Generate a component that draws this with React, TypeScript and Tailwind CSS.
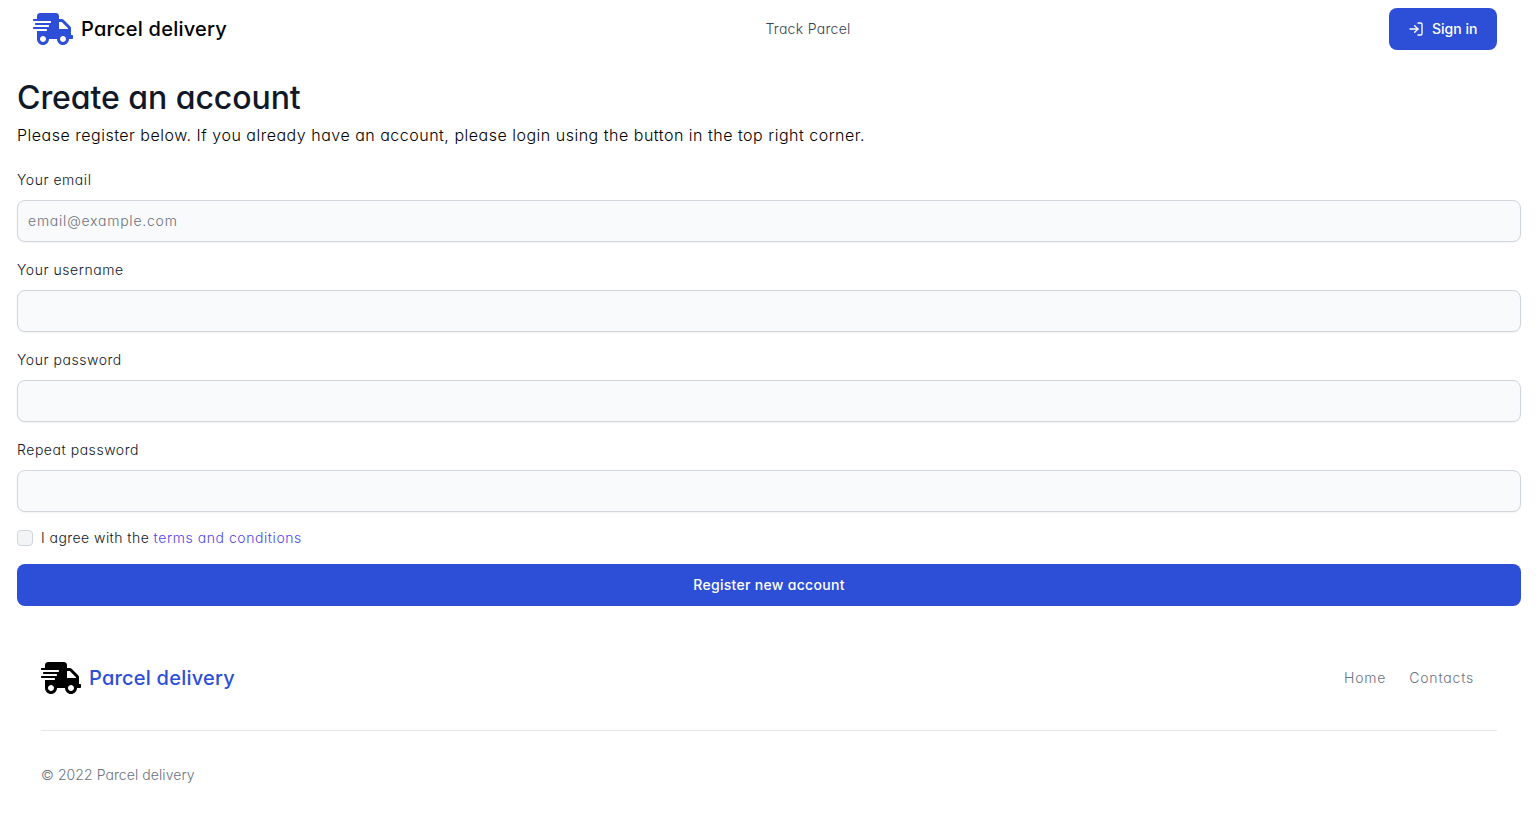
import React from "react";
import { FaShippingFast } from "react-icons/fa";
import { FiLogIn } from "react-icons/fi";

function Field({ label, type, placeholder }: { label: string; type: string; placeholder?: string }) {
  return (
    <div className="mb-4 flex flex-col">
      <label className="mb-2 h-6 text-sm leading-6 tracking-[0.54px] text-[#111827]">
        <span>{label}</span>
      </label>
      <input
        type={type}
        placeholder={placeholder}
        className="h-[42px] w-full rounded-lg border border-gray-300 bg-gray-50 px-2.5 pb-0.5 text-sm tracking-[0.77px] shadow-xs placeholder:text-[#6b7280]"
      />
    </div>
  );
}

export default function App() {
  return (
    <div className="h-[823px] bg-white font-['Inter',sans-serif] font-light text-black [font-feature-settings:'cv11']">
      <header className="flex h-[58px] items-center justify-between pl-[33px] pr-[41px]">
        <a className="flex items-center gap-2">
          <FaShippingFast className="size-10 text-[#2d4fd7]" />
          <span className="text-xl font-medium tracking-[0.22px]">Parcel delivery</span>
        </a>
        <a className="text-sm tracking-[0.3px] text-[#374151]">Track Parcel</a>
        <button className="flex h-[42px] w-[108px] items-center gap-2 rounded-lg bg-[#2d4fd7] pl-[19px] text-sm font-medium text-white">
          <FiLogIn className="size-4" />
          <span>Sign in</span>
        </button>
      </header>
      <main className="px-[17px] pt-[19px]">
        <h1 className="text-[32px] leading-[42px] font-medium tracking-[-0.06px] text-[#111827]">Create an account</h1>
        <p className="mt-1 text-base leading-6 tracking-[0.505px]">
          Please register below. If you already have an account, please login using the button in the top right corner.
        </p>
        <form className="mt-[21px] flex flex-col">
          <Field label="Your email" type="email" placeholder="email@example.com" />
          <Field label="Your username" type="text" />
          <Field label="Your password" type="password" />
          <Field label="Repeat password" type="password" />
          <div className="flex h-5 items-center gap-2 text-sm tracking-[0.45px] text-[#111827]">
            <input type="checkbox" className="size-4 appearance-none rounded border border-gray-300 bg-gray-100" />
            <label>
              I agree with the <a className="tracking-[0.56px] text-[#4f46e5]">terms and conditions</a>
            </label>
          </div>
          <button type="button" className="mt-4 h-[42px] rounded-lg bg-[#2d4fd7] text-sm font-medium tracking-[0.3px] text-white">
            Register new account
          </button>
        </form>
      </main>
      <footer className="px-[41px] pt-[52px]">
        <div className="flex h-10 items-center justify-between pr-[23px]">
          <a className="flex items-center gap-2">
            <FaShippingFast className="size-10" />
            <span className="text-xl font-medium tracking-[0.22px] text-[#2d4fd7]">Parcel delivery</span>
          </a>
          <nav className="flex gap-[23px] text-sm tracking-[0.8px] text-[#6b7280]">
            <a>Home</a>
            <a>Contacts</a>
          </nav>
        </div>
        <hr className="mt-8 border-gray-200" />
        <p className="mt-8 text-sm leading-6 tracking-[0.08px] text-[#6b7280]">© 2022 Parcel delivery</p>
      </footer>
    </div>
  );
}
